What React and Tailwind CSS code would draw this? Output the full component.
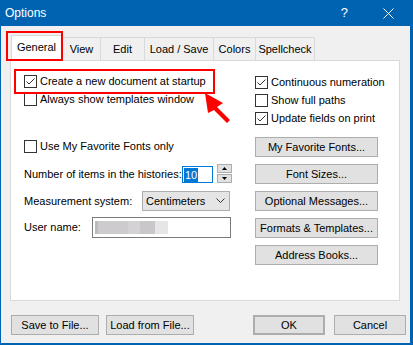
import React from 'react';

const font = { fontFamily: '"Liberation Sans", Arial, sans-serif' };

function Check({ checked }) {
  return (
    <span className="w-[13px] h-[13px] border border-[#333333] bg-white flex items-center justify-center shrink-0">
      {checked && (
        <svg width="11" height="11" viewBox="0 0 11 11">
          <polyline points="1.5,5.5 4,8 9.5,2.5" fill="none" stroke="#333333" strokeWidth="1" />
        </svg>
      )}
    </span>
  );
}

function CheckRow({ checked, label, className = '' }) {
  return (
    <div className={`flex items-center gap-[3px] h-[18px] whitespace-nowrap ${className}`}>
      <Check checked={checked} />
      <span>{label}</span>
    </div>
  );
}

function Btn({ children, className = '' }) {
  return (
    <div className={`h-[20px] flex items-center justify-center whitespace-nowrap bg-[#e1e1e1] border border-[#adadad] ${className}`}>
      {children}
    </div>
  );
}

const tabs = [
  { label: 'View', w: 'w-[38px]' },
  { label: 'Edit', w: 'w-[44px]' },
  { label: 'Load / Save', w: 'w-[69px]' },
  { label: 'Colors', w: 'w-[42px]' },
  { label: 'Spellcheck', w: 'w-[60px] border-r' },
];

export default function App() {
  return (
    <div
      className="relative w-[413px] h-[345px] bg-[#f0f0f0] border-l border-r-[3px] border-b-2 border-[#0063b1] text-[11px] text-black flex flex-col overflow-hidden"
      style={font}
    >
      {/* title bar */}
      <div className="h-[26px] bg-[#0063b1] text-white flex items-center shrink-0">
        <span className="ml-[4px] text-[12px]">Options</span>
        <span className="ml-auto mr-[35px] text-[13px]">?</span>
        <svg width="11" height="11" viewBox="0 0 11 11" className="mr-[16px]">
          <path d="M0.5 0.5 L10.5 10.5 M10.5 0.5 L0.5 10.5" stroke="white" strokeWidth="1" />
        </svg>
      </div>

      {/* tabs */}
      <div className="relative z-10 flex items-end h-[26px] mt-[9px] -mb-px ml-[10px] whitespace-nowrap">
        <div className="w-[51px] h-[26px] bg-white border border-b-0 border-[#d9d9d9] flex items-center justify-center pb-[3px]">
          General
        </div>
        {tabs.map((t) => (
          <div
            key={t.label}
            className={`${t.w} h-[23px] mb-px border-l border-t border-[#d9d9d9] flex items-center justify-center`}
          >
            {t.label}
          </div>
        ))}
      </div>

      {/* panel */}
      <div className="ml-[9px] w-[390px] h-[241px] bg-white border border-[#d9d9d9] flex shrink-0">
        <div className="w-[244px] pl-[13px] pt-[11px] flex flex-col">
          <CheckRow checked label="Create a new document at startup" />
          <CheckRow label="Always show templates window" />
          <CheckRow label="Use My Favorite Fonts only" className="mt-[29px]" />
          <div className="flex items-center h-[21px] mt-[9px] whitespace-nowrap">
            <span>Number of items in the histories:</span>
            <div className="ml-auto mr-[42px] w-[31px] h-[17px] border border-[#0078d7] flex items-center pl-[1px]">
              <span className="bg-[#0078d7] text-white px-[1px] leading-[14px]">10</span>
            </div>
          </div>
          <div className="flex items-center h-[20px] mt-[6px] whitespace-nowrap">
            <span>Measurement system:</span>
            <div className="ml-auto mr-[25px] w-[88px] h-[20px] bg-[#e5e5e5] border border-[#adadad] flex items-center pl-[3px] pr-[4px]">
              <span>Centimeters</span>
              <svg width="9" height="6" viewBox="0 0 9 6" className="ml-auto">
                <polyline points="0.5,0.5 4.5,4.5 8.5,0.5" fill="none" stroke="#333" strokeWidth="1" />
              </svg>
            </div>
          </div>
          <div className="flex items-center h-[21px] mt-[6px] whitespace-nowrap">
            <span>User name:</span>
            <div className="ml-auto mr-[24px] w-[139px] h-[21px] border border-[#7a7a7a] bg-white flex items-center pl-[2px]">
              <div className="w-[3px] h-[13px] bg-[#bdbbbd]" />
              <div className="w-[30px] h-[13px] bg-[#cdcbcd]" />
              <div className="w-[12px] h-[13px] bg-[#d4d2d4]" />
              <div className="w-[15px] h-[13px] bg-[#c9c7c9]" />
              <div className="w-[13px] h-[13px] bg-[#e6e6e6]" />
            </div>
          </div>
        </div>
        <div className="w-[123px] pt-[12px] flex flex-col">
          <CheckRow checked label="Continuous numeration" />
          <CheckRow label="Show full paths" />
          <CheckRow checked label="Update fields on print" />
          <div className="flex flex-col gap-[7px] mt-[10px]">
            <Btn>My Favorite Fonts...</Btn>
            <Btn>Font Sizes...</Btn>
            <Btn>Optional Messages...</Btn>
            <Btn>Formats &amp; Templates...</Btn>
            <Btn>Address Books...</Btn>
          </div>
        </div>
      </div>

      {/* bottom buttons */}
      <div className="flex mt-[14px] ml-[10px] gap-[7px]">
        <Btn className="w-[88px]">Save to File...</Btn>
        <Btn className="w-[88px]">Load from File...</Btn>
        <Btn className="w-[72px] ml-[52px] border-2 border-[#0078d7]">OK</Btn>
        <Btn className="w-[72px] ml-[2px]">Cancel</Btn>
      </div>

      {/* spinner */}
      <div className="absolute left-[216px] top-[164px] w-[15px] flex flex-col gap-px">
        <div className="h-[9px] bg-[#e1e1e1] border border-[#adadad] flex items-center justify-center">
          <svg width="5" height="3" viewBox="0 0 5 3"><polygon points="2.5,0 5,3 0,3" fill="#000" /></svg>
        </div>
        <div className="h-[9px] bg-[#e1e1e1] border border-[#adadad] flex items-center justify-center">
          <svg width="5" height="3" viewBox="0 0 5 3"><polygon points="0,0 5,0 2.5,3" fill="#000" /></svg>
        </div>
      </div>

      {/* annotations */}
      <div className="absolute left-[5px] top-[31px] w-[57px] h-[30px] border-2 border-[#ff0000] z-20 pointer-events-none" />
      <div className="absolute left-[13px] top-[69px] w-[201px] h-[25px] border-2 border-[#ff0000] z-20 pointer-events-none" />
      <svg className="absolute left-0 top-0 z-20 pointer-events-none" width="413" height="345">
        <polygon
          points="204,93 222,103 216,107 229,120 226,123 213,110 207,113"
          fill="#ff0000"
        />
      </svg>
    </div>
  );
}
